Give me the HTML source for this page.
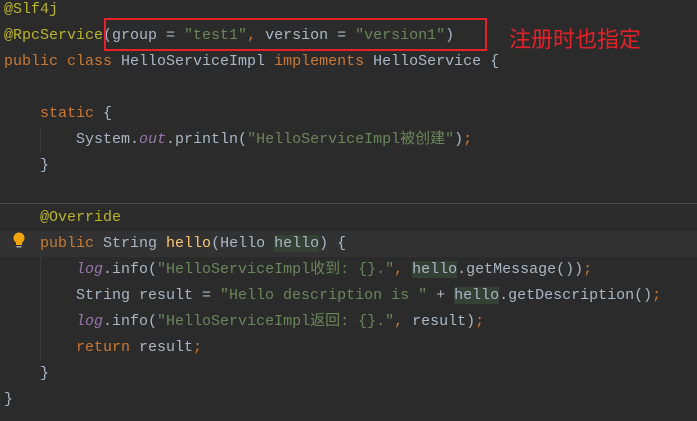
<!DOCTYPE html>
<html><head><meta charset="utf-8"><style>
body{margin:0;width:697px;height:421px;background:#2b2b2b;overflow:hidden;position:relative;font-family:"Liberation Mono","Noto Sans CJK SC",monospace;font-size:15px;color:#a9b7c6}
.l{position:absolute;left:4px;height:26px;line-height:26px;white-space:pre}
.k{color:#cc7832}.a{color:#bbb529}.s{color:#6a8759}.m{color:#ffc66d}.p{color:#9876aa;font-style:italic}
.h{background:#344134}
</style></head><body>
<div style="position:absolute;left:0;top:231px;width:697px;height:26px;background:#323232"></div>
<div style="position:absolute;left:0;top:203px;width:697px;height:1px;background:#4a4a4a"></div>
<div style="position:absolute;left:40px;top:127px;width:1px;height:26px;background:#393939"></div>
<div style="position:absolute;left:40px;top:257px;width:1px;height:104px;background:#393939"></div>
<div class="l" style="top:-3px"><span class="a">@Slf4j</span></div>
<div class="l" style="top:23px"><span class="a">@RpcService</span>(group = <span class="s">"test1"</span><span class="k">,</span> version = <span class="s">"version1"</span>)</div>
<div class="l" style="top:49px"><span class="k">public class </span>HelloServiceImpl <span class="k">implements </span>HelloService {</div>
<div class="l" style="top:101px">    <span class="k">static </span>{</div>
<div class="l" style="top:127px">        System.<span class="p">out</span>.println(<span class="s">"HelloServiceImpl被创建"</span>)<span class="k">;</span></div>
<div class="l" style="top:153px">    }</div>
<div class="l" style="top:205px">    <span class="a">@Override</span></div>
<div class="l" style="top:231px">    <span class="k">public </span>String <span class="m">hello</span>(Hello <span class="h">hello</span>) {</div>
<div class="l" style="top:257px">        <span class="p">log</span>.info(<span class="s">"HelloServiceImpl收到: {}."</span><span class="k">, </span><span class="h">hello</span>.getMessage())<span class="k">;</span></div>
<div class="l" style="top:283px">        String result = <span class="s">"Hello description is "</span> + <span class="h">hello</span>.getDescription()<span class="k">;</span></div>
<div class="l" style="top:309px">        <span class="p">log</span>.info(<span class="s">"HelloServiceImpl返回: {}."</span><span class="k">, </span>result)<span class="k">;</span></div>
<div class="l" style="top:335px">        <span class="k">return </span>result<span class="k">;</span></div>
<div class="l" style="top:361px">    }</div>
<div class="l" style="top:387px">}</div>
<svg style="position:absolute;left:12px;top:232px" width="14" height="18"><circle cx="7" cy="6" r="5.5" fill="#f0a30a"/><rect x="4" y="10" width="6" height="3" fill="#f0a30a"/><rect x="4.5" y="14" width="5" height="1.5" fill="#aaa"/></svg>
<div style="position:absolute;left:104px;top:18px;width:379px;height:29px;border:2px solid #e8202a"></div>
<div style="position:absolute;left:509px;top:23px;font-family:'Noto Sans CJK SC',sans-serif;font-size:22px;line-height:30px;color:#e8202a">注册时也指定</div>
</body></html>
